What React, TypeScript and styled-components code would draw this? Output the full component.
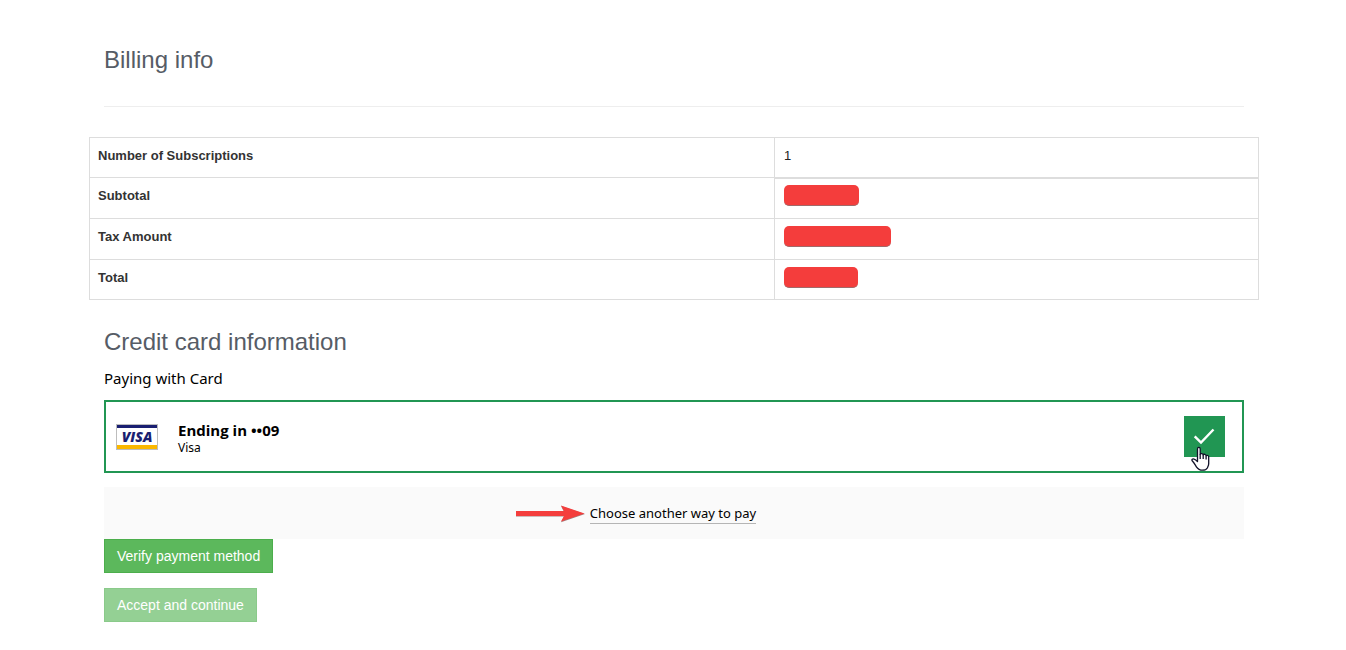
import React from "react";
import styled, { createGlobalStyle } from "styled-components";

const ui = `"Segoe UI", "Noto Sans", "Open Sans", sans-serif`;
const arial = `"Liberation Sans", Arial, sans-serif`;

const GlobalStyle = createGlobalStyle`
  *, *::before, *::after { box-sizing: border-box; }
  body { margin: 0; background: #fff; color: #333; font: 13px/20px ${arial}; }
`;

const Page = styled.main`
  padding: 47px 87px 28px 89px;
`;

const Section = styled.section`
  padding: 0 15px;
`;

const Heading = styled.h2`
  margin: 0;
  font-size: 24px;
  line-height: 26px;
  font-weight: 400;
  color: #565c66;
`;

const Rule = styled.hr`
  margin: 33px 0 30px;
  border: 0;
  border-top: 1px solid #eee;
`;

const Table = styled.table`
  width: 100%;
  table-layout: fixed;
  border-collapse: separate;
  border-spacing: 0;
  border: solid #ddd;
  border-width: 1px 0 0 1px;
  margin-bottom: 29px;
`;

const Label = styled.th`
  width: 58.6%;
  padding: 8px;
  text-align: left;
  vertical-align: top;
  border: solid #ddd;
  border-width: 0 1px 1px 0;
`;

const Value = styled.td<{ $double?: boolean }>`
  padding: 7px 9px;
  vertical-align: top;
  border: solid #ddd;
  border-width: 0 1px 1px 0;
  box-shadow: ${(p) => (p.$double ? "inset 0 1px 0 #ddd" : "none")};
`;

const Count = styled(Value)`
  padding-top: 8px;
  color: #222;
`;

const Row = styled.tr<{ $short?: boolean }>`
  & > * { height: ${(p) => (p.$short ? 40 : 41)}px; }
`;

const Redaction = styled.span<{ $width: number }>`
  display: block;
  width: ${(p) => p.$width}px;
  height: 21px;
  border-radius: 5px;
  background: #f43d3c;
  border-bottom: 1px solid #a06a6a;
`;

const Caption = styled.p`
  margin: 13px 0 12px;
  font: 15px/20px ${ui};
  color: #000;
`;

const Card = styled.label`
  display: flex;
  align-items: center;
  height: 73px;
  padding: 0 17px 0 10px;
  border: 2px solid #219653;
  color: #000;
  font-family: ${ui};
`;

const CardText = styled.span`
  display: flex;
  flex-direction: column;
  flex: 1;
  margin-left: 20px;
  padding-top: 3px;
`;

const CardNumber = styled.strong`
  font: 700 15px/20px "Open Sans", "Segoe UI", sans-serif;
`;

const CardBrand = styled.span`
  font-size: 12px;
  line-height: 16px;
`;

const Tick = styled.span`
  position: relative;
  display: grid;
  width: 41px;
  height: 41px;
  place-items: center;
  & > input, & > .mark { grid-area: 1 / 1; }
`;

const Radio = styled.input`
  appearance: none;
  width: 100%;
  height: 100%;
  margin: 0;
  background: #219653;
`;

const Pointer = styled.svg`
  position: absolute;
  left: 7px;
  top: 30px;
`;

const Alternative = styled.div`
  display: flex;
  justify-content: center;
  align-items: center;
  height: 52px;
  margin-top: 14px;
  padding: 2px 76px 0 0;
  gap: 5px;
  background: #fafafa;
`;

const AltLink = styled.a`
  font: 13px/19px ${ui};
  color: #000;
  text-decoration: none;
  border-bottom: 1px solid #b5b5b5;
`;

const Actions = styled.div`
  display: flex;
  flex-direction: column;
  align-items: flex-start;
  gap: 15px;
`;

const Button = styled.button`
  height: 34px;
  padding: 0 12px;
  border: 1px solid #4cae4c;
  border-radius: 0;
  background: #5cb85c;
  color: #fff;
  font: 14px/20px ${arial};
  &:disabled { opacity: 0.65; }
`;

const VisaLogo = () => (
  <svg width="42" height="26" viewBox="0 0 42 26" role="img" aria-label="Visa">
    <rect x="0.5" y="0.5" width="41" height="25" fill="#fff" stroke="#bdbdbd" />
    <rect x="1" y="1" width="40" height="3" fill="#1a1f71" />
    <rect x="1" y="21" width="40" height="4" fill="#fbb800" />
    <text x="21" y="18" textAnchor="middle" fontFamily="Open Sans, sans-serif" fontSize="14" fontWeight="800" fontStyle="italic" fill="#1a1f71">VISA</text>
  </svg>
);

const rows = [
  { label: "Subtotal", width: 75 },
  { label: "Tax Amount", width: 107 },
  { label: "Total", width: 74 },
];

export default function App() {
  return (
    <>
      <GlobalStyle />
      <Page>
        <Section>
          <Heading>Billing info</Heading>
          <Rule />
        </Section>
        <Table>
          <tbody>
            <Row $short>
              <Label scope="row">Number of Subscriptions</Label>
              <Count>1</Count>
            </Row>
            {rows.map((r, i) => (
              <Row key={r.label} $short={i === 2}>
                <Label scope="row">{r.label}</Label>
                <Value $double={i === 0}>
                  <Redaction $width={r.width} />
                </Value>
              </Row>
            ))}
          </tbody>
        </Table>
        <Section>
          <Heading>Credit card information</Heading>
          <Caption>Paying with Card</Caption>
          <Card>
            <VisaLogo />
            <CardText>
              <CardNumber>Ending in ••09</CardNumber>
              <CardBrand>Visa</CardBrand>
            </CardText>
            <Tick>
              <Radio type="radio" name="card" defaultChecked />
              <svg className="mark" width="41" height="41" viewBox="0 0 41 41" fill="none" aria-hidden="true">
                <path d="M10.7 20.3 17 26.6 29.5 13.5" stroke="#fff" strokeWidth="2.4" />
              </svg>
              <Pointer width="20" height="25" viewBox="0 0 20 25" aria-hidden="true">
                <path
                  d="M6.5 15V3C6.5 .9 9.2 .9 9.2 3V8.2C9.7 7.2 12 7.3 12.2 8.8 12.9 7.8 14.9 8.2 15.1 9.7 16 8.9 17.7 9.5 17.7 11V17.5C17.7 19.8 16.8 20.5 16.3 22 15.4 23.7 13.5 24.2 11.5 24.2 8 24.2 6.6 22.6 5.4 20.8 4 18.6 3.2 16.8 1.4 15 .2 13.4 1.7 12.4 3.1 13.1 4.6 13.6 5.4 14.4 6.5 15.6Z"
                  fill="#fff"
                  stroke="#111128"
                  strokeWidth="1.3"
                  strokeLinejoin="round"
                />
                <path d="M9.2 8V13M12.2 8.8V13M15.1 9.7V13.5" stroke="#111128" strokeWidth="1.3" />
              </Pointer>
            </Tick>
          </Card>
          <Alternative>
            <svg width="69" height="18" viewBox="0 0 69 18" aria-hidden="true">
              <path d="M0 7H48L45 1 69 9 45 17.3 48 11.4H0Z" fill="#a08080" />
              <path d="M0 6H48L45 .5 68.5 8.5 45 16.5 48 11H0Z" fill="#f43d3c" />
            </svg>
            <AltLink href="#payment-methods">Choose another way to pay</AltLink>
          </Alternative>
          <Actions>
            <Button type="button">Verify payment method</Button>
            <Button type="button" disabled>Accept and continue</Button>
          </Actions>
        </Section>
      </Page>
    </>
  );
}
